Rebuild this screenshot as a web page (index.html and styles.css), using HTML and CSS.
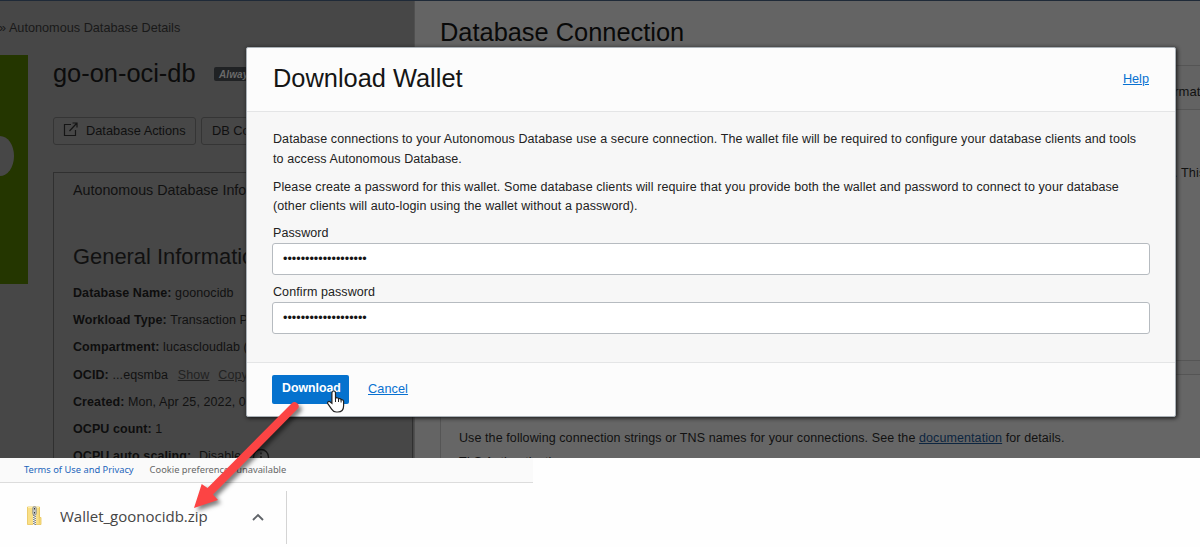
FILE: index.html
```
<!DOCTYPE html>
<html lang="en">
<head>
<meta charset="utf-8">
<title>Download Wallet</title>
<link rel="stylesheet" href="styles.css">
</head>
<body>
<div class="screen">
  <main class="console">
    <section class="details">
      <div class="breadcrumb">» Autonomous Database Details</div>
      <div class="details-body">
        <div class="db-logo"><span class="logo-letter"></span></div>
        <div class="details-main">
          <div class="title-row"><h1>go-on-oci-db</h1><span class="tag">Always</span></div>
          <div class="actions">
            <div class="action action-first">
              <svg class="external" viewBox="0 0 15 15"><path d="M8 2.500H1.500v11h11V8M6.500 9L13.500 1.500M9.500 1H14v4.500" fill="none" stroke="#151515" stroke-width="1.200"/></svg>
              <span>Database Actions</span>
            </div>
            <div class="action">DB Connection</div>
          </div>
          <div class="info-panel">
            <div class="tab">Autonomous Database Information</div>
            <h2>General Information</h2>
            <div class="row"><b>Database Name:</b> goonocidb</div>
            <div class="row"><b>Workload Type:</b> Transaction Processing</div>
            <div class="row"><b>Compartment:</b> lucascloudlab (root)</div>
            <div class="row"><b>OCID:</b> ...eqsmba <a class="dim-link">Show</a><a class="dim-link">Copy</a></div>
            <div class="row"><b>Created:</b> Mon, Apr 25, 2022, 05:00</div>
            <div class="row"><b>OCPU count:</b> 1</div>
            <div class="row"><b>OCPU auto scaling:</b> <span class="scaling">Disabled</span><svg class="info" viewBox="0 0 18 18"><circle cx="9" cy="9" r="7.5" fill="none" stroke="#151515" stroke-width="1.3"/><path d="M9 8v5M9 4.6v1.6" stroke="#151515" stroke-width="1.4"/></svg></div>
          </div>
        </div>
      </div>
    </section>
    <section class="connection">
      <h1>Database Connection</h1>
      <div class="card card-top">
        <div class="card-head">Wallet information</div>
        <div class="card-text">. This</div>
      </div>
      <div class="card card-bottom">
        <p>Use the following connection strings or TNS names for your connections. See the <a>documentation</a> for details.</p>
        <p>TLS Authentication</p>
      </div>
    </section>
  </main>
  <div class="page-footer"><a>Terms of Use and Privacy</a><span>Cookie preferences unavailable</span></div>
  <div class="shelf">
    <div class="download-item">
      <svg class="zip" viewBox="0 0 15 19"><path d="M.5 1h12v10.500H14V18.500H.5z" fill="#f9df87" stroke="#e9c458" stroke-width=".8"/><path d="M12.300 1v16.500" stroke="#e9c458" stroke-width=".7"/><path d="M1 1.500h11" stroke="#fff0ac"/><path d="M7.500 9v10" stroke="#f4f4f0" stroke-width="3"/><path d="M6.800 9v10" stroke="#777b7d" stroke-width="1.400" stroke-dasharray="1 1"/><path d="M8.200 10v9" stroke="#777b7d" stroke-width="1.400" stroke-dasharray="1 1"/><rect x="5.800" y=".6" width="3.400" height="8.600" rx="1.600" fill="#c9cccb" stroke="#7f8384" stroke-width=".8"/><path d="M7.500 2v1.500M7.500 6v1.500" stroke="#333"/></svg>
      <span class="file">Wallet_goonocidb.zip</span>
      <svg class="chevron" viewBox="0 0 12 8"><path d="M1 7l5-5 5 5" fill="none" stroke="#5f6368" stroke-width="1.900"/></svg>
    </div>
  </div>

  <div class="dialog">
    <header><h2>Download Wallet</h2><a>Help</a></header>
    <div class="dialog-body">
      <p>Database connections to your Autonomous Database use a secure connection. The wallet file will be required to configure your database clients and tools<br>to access Autonomous Database.</p>
      <p>Please create a password for this wallet. Some database clients will require that you provide both the wallet and password to connect to your database<br>(other clients will auto-login using the wallet without a password).</p>
      <div class="label">Password</div>
      <div class="field">•••••••••••••••••••</div>
      <div class="label confirm">Confirm password</div>
      <div class="field">•••••••••••••••••••</div>
    </div>
    <footer><span class="primary">Download</span><a>Cancel</a></footer>
  </div>

  <svg class="pointer-art" viewBox="0 0 1200 547">
    <path class="arrow" d="M291.500 403.500L207.500 488l-5.800-4L194 508l24-8-5-5.500L297.500 409a4 4 0 0 0-6-5.500z"/>
    <path class="hand" d="M333.700 391c1.300 0 1.800.9 1.800 2v5.300c.9-1 2.700-.7 3 .6.900-.7 2.400-.3 2.600.9 1.300-.5 2.500.2 2.500 1.600v4.300c0 3.700-2 6.300-5.800 6.300h-1.600c-2.200 0-3.400-1-4.600-2.900l-3.800-5.500c-.8-1.300.7-2.700 2.100-1.900l2 1.500V393c0-1.100.6-2 1.800-2z"/>
    <path class="fingers" d="M335.500 398v4M338.500 399v3M341.100 400v2.500"/>
  </svg>
</div>
</body>
</html>
```
FILE: styles.css
```
* { box-sizing: border-box; }
body { margin: 0; background: #fefefe; font-family: "Liberation Sans", Arial, sans-serif; }
h1, h2, p { margin: 0; font-weight: 400; }
.screen { position: relative; width: 1200px; height: 547px; overflow: hidden; white-space: nowrap; }
.console { display: flex; height: 458px; overflow: hidden; border-top: 1px solid #1f2a38; font-size: 12.500px; color: #111; letter-spacing: .09px; }
.details { flex: 0 0 415px; background: #474747; border-right: 1px solid #505050; overflow: hidden; }
.breadcrumb { height: 54px; padding-top: 19px; line-height: 16px; color: #191919; font-size: 12.700px; letter-spacing: 0; margin-left: -1px; }
.details-body { display: flex; }
.db-logo { flex: 0 0 28px; height: 229px; padding-top: 81px; background: #243600; }
.logo-letter { display: block; width: 14px; height: 40px; background: #474747; border-radius: 0 14px 14px 0 / 0 20px 20px 0; }
.details-main { padding-left: 25px; flex: 1; }
.title-row { display: flex; height: 62px; }
.title-row h1 { width: 161px; padding-top: 2px; font-size: 25.400px; line-height: 32px; letter-spacing: 0; color: #0c0c0c; }
.tag { height: 14px; margin-top: 12px; padding: 0 5px; border-radius: 2px; background: #202224; color: #6a6a6a; font: italic bold 10px/15px "Liberation Sans"; }
.actions { display: flex; gap: 5px; height: 55px; }
.action { display: flex; align-items: center; height: 28px; padding: 0 10px 2px; border: 1px solid #353535; border-radius: 3px; font-size: 12.800px; color: #101010; letter-spacing: 0; }
.action-first { width: 143px; gap: 8px; padding-left: 9px; }
.external { flex: none; width: 15px; height: 15px; margin-bottom: 2px; }
.info-panel { width: 360px; height: 300px; border: 1px solid #303030; padding: 8px 0 0 19px; }
.tab { height: 62px; font-size: 14.300px; line-height: 19px; letter-spacing: 0; }
.info-panel h2 { height: 37px; font-size: 21.900px; line-height: 28px; letter-spacing: 0; }
.row { height: 27.200px; line-height: 27.200px; }
.row b { color: #0e0e0e; }
.dim-link { text-decoration: underline; color: #222; margin: 0 3px 0 6px; }
.scaling { margin-left: 4px; }
.info { width: 18px; height: 18px; margin-left: 4px; vertical-align: middle; }
.connection { flex: 1; background: #646464; padding-left: 25px; }
.connection h1 { height: 64px; padding-top: 14px; font-size: 25.400px; line-height: 34px; letter-spacing: 0; color: #090909; }
.card { border: 1px solid #555; border-right: 0; background: #666; }
.card-top { height: 296px; }
.card-head { height: 44px; padding: 17px 0 0 672px; border-bottom: 1px solid #555; background: #636363; font-size: 13px; line-height: 18px; }
.card-text { padding: 54px 0 0 733px; font-size: 12.700px; line-height: 18px; }
.card-bottom { height: 140px; margin-top: 13px; padding: 54px 0 0 18px; line-height: 19px; }
.card-bottom p + p { margin-top: 5px; }
.card-bottom a { color: #0c2540; text-decoration: underline; }
.page-footer { display: flex; gap: 16px; width: 533px; height: 25px; padding-left: 24px; border-bottom: 1px solid #dcdcdc; background: #fafafa; font: 9.320px/24px "Noto Sans", sans-serif; color: #666; }
.page-footer a { color: #2264ba; }
.shelf { display: flex; height: 64px; padding-top: 8px; }
.download-item { display: flex; align-items: center; width: 287px; height: 53px; padding-left: 27px; border-right: 1px solid #d4d4d4; }
.zip { flex: none; width: 15px; height: 19px; margin-bottom: 4px; }
.file { width: 193px; padding: 0 0 3px 18px; color: #454545; font: 15px/22px "Open Sans", sans-serif; }
.chevron { width: 12px; height: 8px; margin: 0 0 2px 17px; flex: none; }
.dialog { position: absolute; left: 246px; top: 47px; width: 930px; height: 370px; border: 1px solid #aab1b7; border-radius: 2px; background: #fcfcfc; box-shadow: 1px 1px 4px #111; overflow: hidden; color: #222; font-size: 12.500px; letter-spacing: .09px; }
.dialog a { color: #0871d1; text-decoration: underline; }
.dialog header { display: flex; justify-content: space-between; height: 64px; padding: 14px 26px 0; border-bottom: 1px solid #e4e5e6; }
.dialog header h2 { color: #151515; font-size: 25.400px; line-height: 32px; letter-spacing: 0; }
.dialog header a { line-height: 34px; font-size: 12.700px; letter-spacing: 0; }
.dialog-body { height: 251px; padding: 18px 25px 0; background: #f7f7f7; border-bottom: 1px solid #e4e5e6; line-height: 19.500px; }
.dialog-body p, .label { padding-left: 1px; }
.dialog-body p { height: 47.500px; }
.label { height: 18px; line-height: 17px; }
.field { height: 32px; padding: 0 10px; border: 1px solid #b6bbc0; border-radius: 3px; background: #fff; color: #151515; font-size: 12.600px; line-height: 30px; letter-spacing: 0; }
.confirm { margin-top: 9px; }
.dialog footer { display: flex; gap: 19px; padding: 12px 25px; line-height: 28px; font-size: 12.700px; }
.primary { width: 77px; height: 29px; padding-left: 10px; border-radius: 2px; background: #0572ce; color: #fff; font-size: 12.300px; font-weight: 700; line-height: 27px; letter-spacing: 0; }
.pointer-art { position: absolute; inset: 0; width: 1200px; height: 547px; pointer-events: none; }
.arrow { fill: #fc4444; filter: drop-shadow(3px 3px 2px rgba(0, 0, 0, .5)); }
.hand { fill: #fff; stroke: #222; stroke-width: 1.200; }
.fingers { fill: none; stroke: #222; stroke-width: 1; }
```
